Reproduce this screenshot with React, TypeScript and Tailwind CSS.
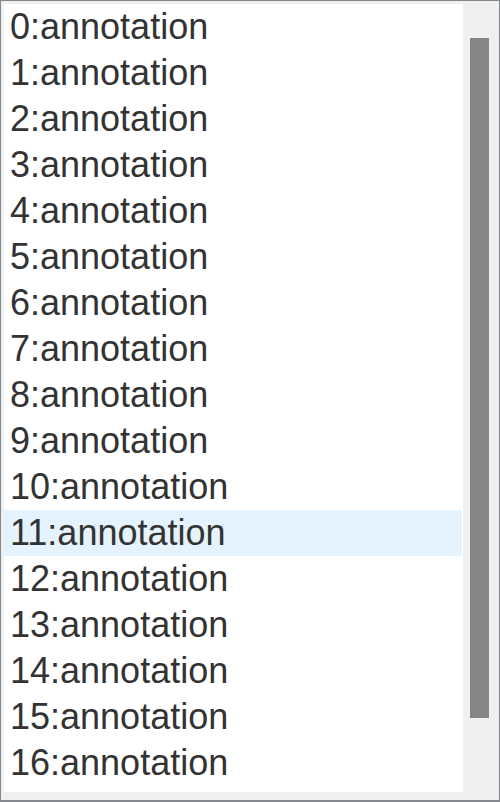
const items = Array.from({ length: 17 }, (_, i) => `${i}:annotation`);

export default function App() {
  return (
    <div className="flex h-[802px] w-[500px] border-x border-t border-b-2 border-[#828790] bg-[#f0f0f0] pl-[3px] pt-[3px] font-['Liberation_Sans',Arial,sans-serif]">
      <ul className="h-[788px] w-[459px] overflow-hidden bg-white">
        {items.map((label, i) => (
          <li
            key={label}
            className={`h-[46px] w-[458px] pl-[6px] text-[36px] leading-[46px] text-[#333333] ${
              i === 11 ? "bg-[#e5f3ff]" : ""
            }`}
          >
            {label}
          </li>
        ))}
      </ul>
      <div className="flex-1">
        <div className="ml-[7px] mt-[34px] h-[680px] w-[19px] bg-[#858585]" />
      </div>
    </div>
  );
}
